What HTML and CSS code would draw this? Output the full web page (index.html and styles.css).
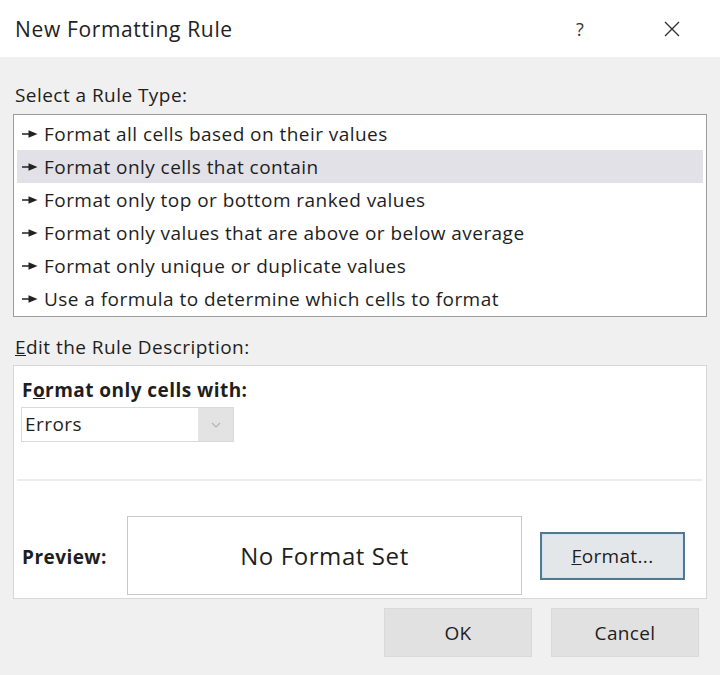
FILE: index.html
```html
<!DOCTYPE html>
<html lang="en">
<head>
    <meta charset="UTF-8">
    <title>New Formatting Rule</title>
    <link rel="stylesheet" href="styles.css">
</head>
<body>
    <div class="dialog">
        <div class="titlebar">
            <span class="title">New Formatting Rule</span>
            <span class="help">?</span>
            <span class="close">
                <svg width="16" height="16" viewBox="0 0 16 16">
                    <path d="M1 1 L15 15 M15 1 L1 15" stroke="#333" stroke-width="1.4" fill="none"/>
                </svg>
            </span>
        </div>

        <div class="content">
            <div class="section-label">Select a Rule Type:</div>
            <div class="rule-list">
                <div class="rule"><svg class="arrow" width="16" height="8" viewBox="0 0 16 8"><path d="M0 3.3 H9 V4.7 H0 Z M6.5 0.3 L15.5 4 L6.5 7.7 Z" fill="#222"/></svg>Format all cells based on their values</div>
                <div class="rule selected"><svg class="arrow" width="16" height="8" viewBox="0 0 16 8"><path d="M0 3.3 H9 V4.7 H0 Z M6.5 0.3 L15.5 4 L6.5 7.7 Z" fill="#222"/></svg>Format only cells that contain</div>
                <div class="rule"><svg class="arrow" width="16" height="8" viewBox="0 0 16 8"><path d="M0 3.3 H9 V4.7 H0 Z M6.5 0.3 L15.5 4 L6.5 7.7 Z" fill="#222"/></svg>Format only top or bottom ranked values</div>
                <div class="rule"><svg class="arrow" width="16" height="8" viewBox="0 0 16 8"><path d="M0 3.3 H9 V4.7 H0 Z M6.5 0.3 L15.5 4 L6.5 7.7 Z" fill="#222"/></svg>Format only values that are above or below average</div>
                <div class="rule"><svg class="arrow" width="16" height="8" viewBox="0 0 16 8"><path d="M0 3.3 H9 V4.7 H0 Z M6.5 0.3 L15.5 4 L6.5 7.7 Z" fill="#222"/></svg>Format only unique or duplicate values</div>
                <div class="rule"><svg class="arrow" width="16" height="8" viewBox="0 0 16 8"><path d="M0 3.3 H9 V4.7 H0 Z M6.5 0.3 L15.5 4 L6.5 7.7 Z" fill="#222"/></svg>Use a formula to determine which cells to format</div>
            </div>

            <div class="section-label edit-label"><u>E</u>dit the Rule Description:</div>
            <div class="description">
                <div class="desc-top">
                    <div class="desc-title">F<u>o</u>rmat only cells with:</div>
                    <div class="select">
                        <span class="select-value">Errors</span>
                        <span class="select-btn">
                            <svg width="10" height="6" viewBox="0 0 10 6"><path d="M1 1 L5 5 L9 1" stroke="#b5b5b5" stroke-width="1.2" fill="none"/></svg>
                        </span>
                    </div>
                </div>
                <div class="separator"></div>
                <div class="preview-row">
                    <span class="preview-label">Preview:</span>
                    <div class="preview-box">No Format Set</div>
                    <button class="button format-btn"><u>F</u>ormat...</button>
                </div>
            </div>

            <div class="actions">
                <button class="button action">OK</button>
                <button class="button action">Cancel</button>
            </div>
        </div>
    </div>
</body>
</html>
```

FILE: styles.css
```css
body {
    margin: 0;
    background-color: #f0f0f0;
    font-family: "Open Sans", "Noto Sans", sans-serif;
    color: #1e1e1e;
}

.dialog {
    width: 720px;
    height: 675px;
    overflow: hidden;
}

.titlebar {
    height: 57px;
    background-color: #ffffff;
    display: flex;
    align-items: center;
}

.title {
    font-size: 21px;
    letter-spacing: 0.65px;
    margin-left: 15px;
    flex: 1;
    color: #222222;
}

.help {
    font-size: 18px;
    width: 20px;
    text-align: center;
    margin-right: 74px;
    color: #333333;
}

.close {
    display: flex;
    margin-right: 40px;
}

.content {
    padding: 0 13px;
    font-size: 19px;
    letter-spacing: 0.45px;
}

.section-label {
    height: 24px;
    line-height: 24px;
    margin-top: 26px;
    padding-left: 2px;
}

.rule-list {
    margin-top: 7px;
    background-color: #ffffff;
    border: 1px solid #9c9c9c;
    padding: 2px 3px 1px;
}

.rule {
    height: 33px;
    display: flex;
    align-items: center;
    padding-left: 5px;
}

.rule.selected {
    background-color: #e1e1e7;
}

.arrow {
    margin-right: 6px;
}

.edit-label {
    margin-top: 18px;
}

.description {
    margin-top: 6px;
    height: 234px;
    box-sizing: border-box;
    background-color: #ffffff;
    border: 1px solid #d7d7d7;
}

.desc-top {
    padding: 12px 0 0 7px;
}

.desc-title {
    font-weight: bold;
    height: 24px;
    line-height: 24px;
    padding-left: 1px;
}

.select {
    margin-top: 5px;
    width: 213px;
    height: 35px;
    box-sizing: border-box;
    border: 1px solid #dadada;
    display: flex;
}

.select-value {
    flex: 1;
    line-height: 33px;
    padding-left: 3px;
}

.select-btn {
    width: 35px;
    background-color: #e3e3e3;
    display: flex;
    align-items: center;
    justify-content: center;
}

.separator {
    margin: 37px 4px 0 3px;
    height: 2px;
    background-color: #ededed;
}

.preview-row {
    margin-top: 35px;
    display: flex;
    align-items: center;
}

.preview-label {
    font-weight: bold;
    width: 113px;
    padding-left: 8px;
    box-sizing: border-box;
    margin-top: 3px;
}

.preview-box {
    width: 395px;
    height: 79px;
    box-sizing: border-box;
    border: 1px solid #c9c9c9;
    display: flex;
    align-items: center;
    justify-content: center;
    font-size: 24px;
    letter-spacing: 0.6px;
}

.button {
    font-family: "Open Sans", "Noto Sans", sans-serif;
    color: #1e1e1e;
    font-size: 19px;
    letter-spacing: 0.35px;
    box-sizing: border-box;
    padding: 0;
}

.format-btn {
    margin-left: 18px;
    width: 145px;
    height: 48px;
    background-color: #e4e7ea;
    border: 2px solid #56788f;
    box-shadow: inset 0 0 0 1px #cfe3f2;
}

.actions {
    margin-top: 9px;
    display: flex;
    justify-content: flex-end;
    gap: 19px;
    padding-right: 8px;
}

.action {
    width: 148px;
    height: 49px;
    background-color: #e1e1e1;
    border: 1px solid #d9d9d9;
}
```
